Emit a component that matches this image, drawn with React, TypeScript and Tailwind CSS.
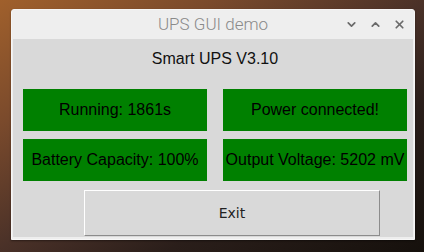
import { ChevronDown, ChevronUp, X } from "lucide-react";

const boxes = [
  "Running: 1861s",
  "Power connected!",
  "Battery Capacity: 100%",
  "Output Voltage: 5202 mV",
];

export default function App() {
  return (
    <div className="w-[424px] h-[252px] overflow-hidden pl-[11px] pt-[9px] bg-[linear-gradient(150deg,#a0602c_0%,#7a4a2c_25%,#4a3128_50%,#2a1e1a_70%,#15100c_100%)]">
      <div className="w-[404px] h-[231px] flex flex-col bg-[#eeeeee] border border-[#f6f6f6] rounded-t-[3px] shadow-[0_1px_2px_rgba(0,0,0,0.4)]">
        <div className="relative h-[29px] flex items-center justify-center">
          <span className="font-['Roboto'] font-light text-[17px] text-[#8a8a8a]">
            UPS GUI demo
          </span>
          <div className="absolute right-[8px] top-0 h-full flex items-center gap-[11px] text-[#6a6a6a]">
            <ChevronDown size={13} strokeWidth={3.2} />
            <ChevronUp size={13} strokeWidth={3.2} />
            <X size={13} strokeWidth={3.2} />
          </div>
        </div>
        <div className="mx-[1px] h-[198px] bg-[#d9d9d9] pl-[10px] pr-[6px] font-['Liberation_Sans',Arial,sans-serif]">
          <div className="h-[50px] pt-[10px] text-center text-[16px] leading-[20px] text-[#111]">
            Smart UPS V3.10
          </div>
          <div className="grid grid-cols-[184px_184px] gap-x-[16px] gap-y-[8px]">
            {boxes.map((t) => (
              <div
                key={t}
                className="h-[42px] bg-[#008000] flex items-center justify-center text-[16px] text-black whitespace-nowrap"
              >
                {t}
              </div>
            ))}
          </div>
          <div className="flex pl-[61px] pt-[9px]">
            <button className="w-[296px] h-[46px] bg-[#d9d9d9] border border-t-white border-l-white border-b-[#8c8c8c] border-r-[#8c8c8c] font-['DejaVu_Sans',sans-serif] text-[14px] text-[#222]">
              Exit
            </button>
          </div>
        </div>
      </div>
    </div>
  );
}
